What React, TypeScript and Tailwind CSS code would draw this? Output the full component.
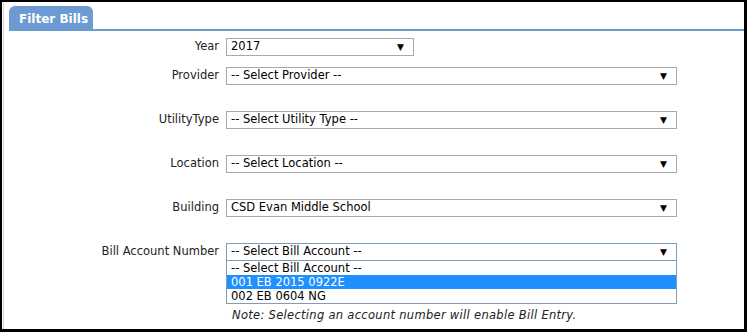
import React from 'react';

const font = { fontFamily: '"DejaVu Sans", Verdana, sans-serif' };

const Select: React.FC<{ value: string; wide?: boolean; focused?: boolean }> = ({
  value,
  wide = true,
  focused,
}) => (
  <div
    className={`flex items-center justify-between h-[18px] border bg-white pl-[4px] pr-[9px] text-[11.5px] text-black ${
      wide ? 'w-[451px]' : 'w-[188px]'
    } ${focused ? 'border-[#7f9db9]' : 'border-[#a9a9a9]'}`}
  >
    <span className="leading-none">{value}</span>
    <span className="text-[9px] leading-none">▼</span>
  </div>
);

const Row: React.FC<{ label: string; className?: string; children: React.ReactNode }> = ({
  label,
  className = '',
  children,
}) => (
  <div className={`flex items-center ${className}`}>
    <label className="w-[223px] pr-[7px] text-right text-[11.5px] text-[#222]">{label}</label>
    <div className="relative">{children}</div>
  </div>
);

export default function App() {
  return (
    <div
      className="w-[747px] h-[332px] bg-white border-t-2 border-l-2 border-r-[3px] border-b-[3px] border-black overflow-hidden"
      style={font}
    >
      <div className="h-full border-l border-[#d0d0d0] ml-[1px] pl-[5px] pt-[4px]">
        <div className="flex">
          <div className="h-[23px] w-[84px] rounded-t-[6px] bg-[#6b9bd1] pl-[10px] pt-[4px] text-[12px] font-bold text-white">
            Filter Bills
          </div>
        </div>
        <div className="h-[2px] bg-[#6b9bd1]" />

        <div className="-ml-[6px]">
          <Row label="Year" className="mt-[7px]">
            <Select value="2017" wide={false} />
          </Row>
          <Row label="Provider" className="mt-[11px]">
            <Select value="-- Select Provider --" />
          </Row>
          <Row label="UtilityType" className="mt-[26px]">
            <Select value="-- Select Utility Type --" />
          </Row>
          <Row label="Location" className="mt-[26px]">
            <Select value="-- Select Location --" />
          </Row>
          <Row label="Building" className="mt-[26px]">
            <Select value="CSD Evan Middle School" />
          </Row>
          <Row label="Bill Account Number" className="mt-[26px]">
            <Select value="-- Select Bill Account --" focused />
            <ul className="absolute left-0 top-[17px] z-10 w-[451px] border border-[#7f9db9] bg-white text-[11.5px] text-black">
              <li className="h-[14px] px-[4px] leading-[14px]">-- Select Bill Account --</li>
              <li className="h-[14px] px-[4px] leading-[14px] bg-[#1e90ff] text-white">001 EB 2015 0922E</li>
              <li className="h-[14px] px-[4px] leading-[14px]">002 EB 0604 NG</li>
            </ul>
          </Row>
          <div className="ml-[229px] mt-[46px] text-[11.5px] tracking-[0.3px] italic text-[#222]">
            Note: Selecting an account number will enable Bill Entry.
          </div>
        </div>
      </div>
    </div>
  );
}
